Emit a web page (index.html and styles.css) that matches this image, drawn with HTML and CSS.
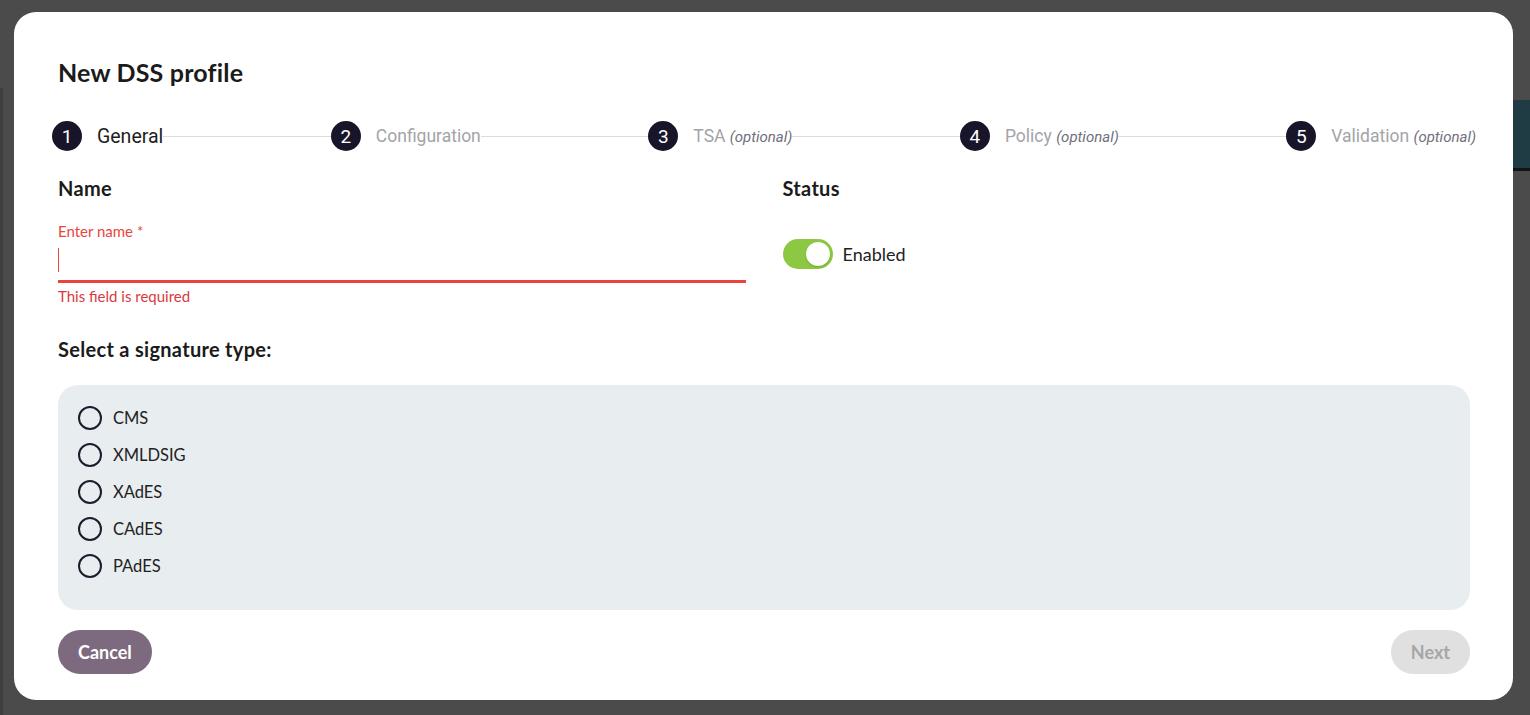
FILE: index.html
```html
<!DOCTYPE html>
<html lang="en">
<head>
  <meta charset="UTF-8">
  <title>New DSS profile</title>
  <meta name="viewport" content="width=device-width, initial-scale=1">
  <link rel="stylesheet" href="styles.css">
</head>
<body>
  <!-- page behind the overlay -->
  <div class="behind behind-side"></div>
  <div class="behind behind-bar"></div>

  <div class="dialog">
    <h1 class="dialog-title">New DSS profile</h1>

    <div class="stepper">
      <div class="step active"><span class="step-num">1</span><span class="step-label">General</span></div>
      <div class="connector"></div>
      <div class="step"><span class="step-num">2</span><span class="step-label">Configuration</span></div>
      <div class="connector"></div>
      <div class="step"><span class="step-num">3</span><span class="step-label">TSA <em>(optional)</em></span></div>
      <div class="connector"></div>
      <div class="step"><span class="step-num">4</span><span class="step-label">Policy <em>(optional)</em></span></div>
      <div class="connector"></div>
      <div class="step"><span class="step-num">5</span><span class="step-label">Validation <em>(optional)</em></span></div>
    </div>

    <div class="form-row">
      <div class="form-col">
        <h2 class="section-title">Name</h2>
        <label class="input-label">Enter name *</label>
        <div class="input-line"><span class="caret"></span></div>
        <p class="field-error">This field is required</p>
      </div>
      <div class="form-col">
        <h2 class="section-title">Status</h2>
        <div class="toggle-row">
          <span class="toggle"><span class="knob"></span></span>
          <span class="toggle-text">Enabled</span>
        </div>
      </div>
    </div>

    <h2 class="section-title sig-title">Select a signature type:</h2>
    <div class="radio-box">
      <label class="radio"><span class="radio-dot"></span>CMS</label>
      <label class="radio"><span class="radio-dot"></span>XMLDSIG</label>
      <label class="radio"><span class="radio-dot"></span>XAdES</label>
      <label class="radio"><span class="radio-dot"></span>CAdES</label>
      <label class="radio"><span class="radio-dot"></span>PAdES</label>
    </div>

    <div class="actions">
      <button class="btn btn-cancel">Cancel</button>
      <button class="btn btn-next" disabled>Next</button>
    </div>
  </div>
</body>
</html>
```

FILE: styles.css
```css
:root {
  --navy: #18152b;
  --error: #e8453c;
  --text: #1c1c1c;
}

* {
  box-sizing: border-box;
}

body {
  margin: 0;
  height: 715px;
  overflow: hidden;
  background: #4b4b4b;
  font-family: 'Lato', 'Open Sans', sans-serif;
  color: var(--text);
  padding: 12px 17px 15px 14px;
  position: relative;
}

.behind {
  position: absolute;
}

.behind-side {
  left: 0;
  top: 88px;
  width: 3px;
  bottom: 0;
  background: #3f3f3f;
}

.behind-bar {
  right: 0;
  top: 100px;
  width: 17px;
  height: 71px;
  background: #1f3c44;
  border-bottom: 3px solid #141416;
}

.dialog {
  position: relative;
  width: 1499px;
  height: 688px;
  background: #fff;
  border-radius: 22px;
  padding: 46px 43px 26px 44px;
  display: flex;
  flex-direction: column;
}

.dialog-title {
  margin: 0;
  font-size: 25px;
  font-weight: 700;
  letter-spacing: 0.2px;
  line-height: 28px;
  color: #1b1b1b;
}

/* stepper */
.stepper {
  display: flex;
  align-items: center;
  margin: 35px -6px 0;
  font-family: 'Roboto', sans-serif;
}

.step {
  display: flex;
  align-items: center;
  gap: 15px;
}

.step-num {
  width: 30px;
  height: 30px;
  border-radius: 50%;
  background: var(--navy);
  color: #fff;
  font-size: 19px;
  display: flex;
  align-items: center;
  justify-content: center;
}

.step-label {
  font-size: 17.5px;
  color: #a3a3a8;
}

.step-label em {
  font-size: 15px;
  color: #6f6f7c;
}

.step.active .step-label {
  font-size: 19.5px;
  color: #1e1e1e;
}

.connector {
  flex: 1;
  height: 1px;
  background: #dcdcdc;
}

/* form */
.form-row {
  display: grid;
  grid-template-columns: 1fr 1fr;
  column-gap: 37px;
  margin-top: 25px;
}

.section-title {
  margin: 0;
  font-size: 20px;
  font-weight: 700;
  letter-spacing: 0.3px;
  line-height: 24px;
  color: #1b1b1b;
}

.input-label {
  display: block;
  margin-top: 22px;
  font-size: 15px;
  line-height: 18px;
  color: var(--error);
}

.input-line {
  height: 43px;
  border-bottom: 3px solid var(--error);
  padding-top: 8px;
}

.caret {
  display: block;
  width: 1px;
  height: 24px;
  background: var(--error);
}

.field-error {
  margin: 4px 0 0;
  font-size: 15px;
  line-height: 18px;
  color: #d83a40;
}

.toggle-row {
  display: flex;
  align-items: center;
  gap: 10px;
  margin-top: 39px;
}

.toggle {
  width: 50px;
  height: 30px;
  border-radius: 15px;
  background: #8cc841;
  padding: 3px;
  display: flex;
  justify-content: flex-end;
}

.knob {
  width: 24px;
  height: 24px;
  border-radius: 50%;
  background: #fff;
  box-shadow: 0 1px 2px rgba(0,0,0,0.2);
}

.toggle-text {
  font-size: 18px;
  color: #222;
}

.sig-title {
  margin-top: 32px;
}

.radio-box {
  margin-top: 24px;
  background: #e8edf0;
  border-radius: 20px;
  padding: 21px 20px 32px;
  display: flex;
  flex-direction: column;
  gap: 13px;
}

.radio {
  display: flex;
  align-items: center;
  gap: 11px;
  font-size: 16.5px;
  color: #222;
}

.radio-dot {
  width: 24px;
  height: 24px;
  border: 2px solid #1d1b2c;
  border-radius: 50%;
}

.actions {
  margin-top: auto;
  display: flex;
  justify-content: space-between;
}

.btn {
  height: 44px;
  border: none;
  border-radius: 22px;
  padding: 0 20px;
  font-family: 'Lato', sans-serif;
  font-size: 18px;
  font-weight: 700;
  cursor: pointer;
}

.btn-cancel {
  background: #7e6a7e;
  color: #fff;
}

.btn-next {
  background: #e0e0e0;
  color: #a6a6a6;
}
```
